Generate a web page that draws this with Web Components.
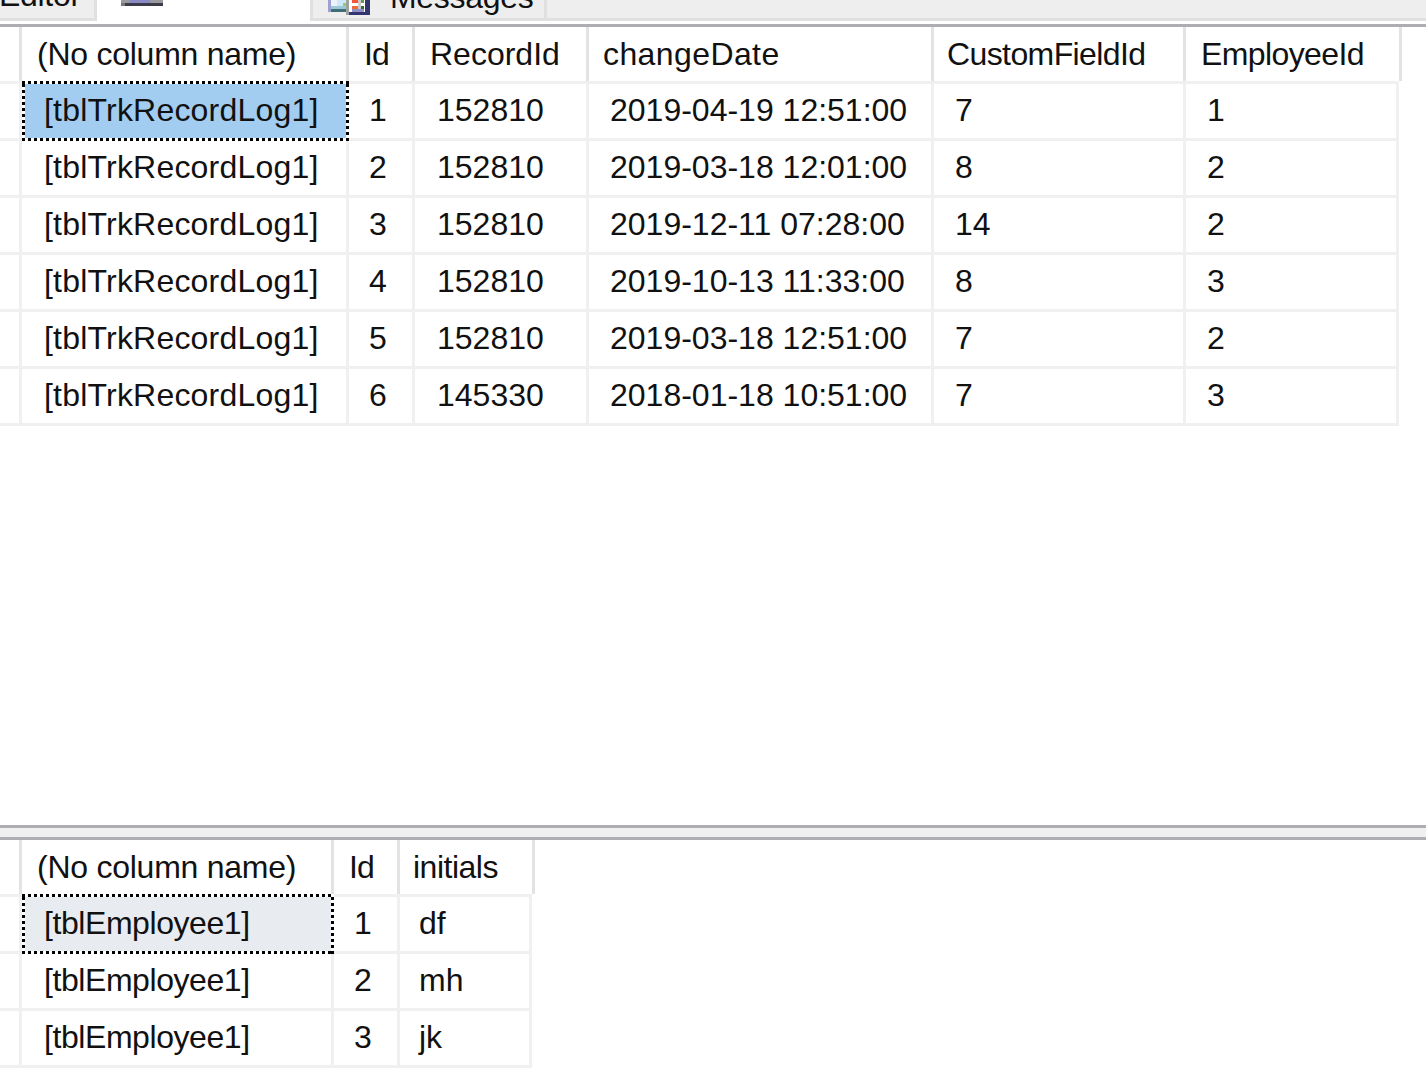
<!DOCTYPE html>
<html>
<head>
<meta charset="utf-8">
<title>Results</title>
<style>
    html, body { margin: 0; height: 100%; background: #fff; overflow: hidden; }
    body { font-family: "Liberation Sans", Arial, sans-serif; color: #000; }
    main { display: flex; flex-direction: column; height: 1075px; }
    result-grid.top { height: 798px; }
</style>
</head>
<body>
<main>
    <tab-strip></tab-strip>
    <result-grid class="top"
        cols="327,66,174,345,252,216"
        head-nudge="0,0,0,-1,-2,0"
        body-nudge="0,-2,0,-1,-1,-1"
        head="(No column name)|Id|RecordId|changeDate|CustomFieldId|EmployeeId"
        selected="#a3cdf0"
        rows="[tblTrkRecordLog1]|1|152810|2019-04-19 12:51:00|7|1;[tblTrkRecordLog1]|2|152810|2019-03-18 12:01:00|8|2;[tblTrkRecordLog1]|3|152810|2019-12-11 07:28:00|14|2;[tblTrkRecordLog1]|4|152810|2019-10-13 11:33:00|8|3;[tblTrkRecordLog1]|5|152810|2019-03-18 12:51:00|7|2;[tblTrkRecordLog1]|6|145330|2018-01-18 10:51:00|7|3"></result-grid>
    <grid-splitter></grid-splitter>
    <result-grid
        cols="312,66,135"
        head-nudge="0,0,-2"
        body-nudge="0,-2,-3"
        head="(No column name)|Id|initials"
        selected="#e8ecf0"
        rows="[tblEmployee1]|1|df;[tblEmployee1]|2|mh;[tblEmployee1]|3|jk"></result-grid>
</main>

<script>
// the reference is hinted GDI text, so some widths differ from Liberation Sans
const TRACKING = {
    "(No column name)": -0.25,
    "Id": -1,
    "changeDate": 0.4,
    "CustomFieldId": -0.6,
    "EmployeeId": -0.6,
    "initials": -0.5,
    "[tblTrkRecordLog1]": 0.2,
    "[tblEmployee1]": -0.43,
};

const tracked = (text) => {
    const t = TRACKING[text];
    return t ? `<span style="letter-spacing:${t}px">${text}</span>` : text;
};

class TabStrip extends HTMLElement {
    connectedCallback() {
        this.attachShadow({ mode: "open" });
        this.shadowRoot.innerHTML = `
            <style>
                :host { display: block; height: 27px; overflow: hidden; box-sizing: border-box; border-bottom: 3px solid #aeaeb2; background: #fff; }
                #bar { display: flex; height: 21px; align-items: flex-end; background: #eeeeee; border-bottom: 3px solid #e0e0e0; box-sizing: border-box; }
                .tab { box-sizing: border-box; height: 40px; flex: none; display: flex; align-items: flex-end; font-size: 32px; line-height: 32px; white-space: nowrap; color: #111; }
                .editor { width: 97px; border-right: 3px solid #e0e0e0; padding-bottom: 7px; text-indent: -1px; letter-spacing: -0.3px; }
                .results { width: 213px; height: 44px; background: #fff; margin-bottom: -3px; padding: 0 0 15px 24px; }
                .messages { width: 237px; padding: 0 0 5px 15px; border-left: 3px solid #e0e0e0; border-right: 3px solid #e0e0e0; gap: 20px; letter-spacing: -0.3px; }
                .messages svg { margin-bottom: -2px; }
                svg { display: block; flex: none; }
            </style>
            <div id="bar">
                <div class="tab editor">Editor</div>
                <div class="tab results">
                    <svg width="42" height="6" viewBox="0 0 42 6" shape-rendering="crispEdges">
                        <rect width="42" height="3" fill="#9a9a9e"/>
                        <rect x="9" width="20" height="3" fill="#8a8ac4"/>
                        <rect y="3" width="42" height="3" fill="#3c3c48"/>
                        <rect y="3" width="4" height="3" fill="#77777c"/>
                    </svg>
                </div>
                <div class="tab messages">
                    <svg width="42" height="15" viewBox="0 0 42 15" shape-rendering="crispEdges">
                        <rect width="3" height="12" fill="#9fa0d2"/>
                        <rect x="3" width="6" height="9" fill="#eef2fb"/>
                        <rect x="9" width="9" height="9" fill="#cfe6fb"/>
                        <rect x="15" y="3" width="3" height="3" fill="#8fcf6f"/>
                        <rect x="3" y="6" width="15" height="3" fill="#9cc8d8"/>
                        <rect x="3" y="9" width="15" height="3" fill="#3f6f72"/>
                        <rect x="18" width="3" height="15" fill="#a0a0a0"/>
                        <rect x="21" width="16" height="12" fill="#fff"/>
                        <rect x="24" width="6" height="3" fill="#f2553a"/>
                        <rect x="24" y="6" width="6" height="3" fill="#f06a3a"/>
                        <rect x="30" width="3" height="9" fill="#cccccc"/>
                        <rect x="33" width="3" height="3" fill="#6a9a4a"/>
                        <rect x="33" y="6" width="3" height="3" fill="#2e6a3a"/>
                        <rect x="24" y="9" width="12" height="3" fill="#9090c8"/>
                        <rect x="37" width="5" height="15" fill="#34346e"/>
                        <rect x="21" y="12" width="21" height="3" fill="#34346e"/>
                    </svg>
                    <span>Messages</span>
                </div>
            </div>
        `;
    }
}

class ResultGrid extends HTMLElement {
    connectedCallback() {
        this.attachShadow({ mode: "open" });
        const cols = this.getAttribute("cols").split(",").map(Number);
        const head = this.getAttribute("head").split("|");
        const rows = this.getAttribute("rows").split(";").map((r) => r.split("|"));
        const headNudge = this.getAttribute("head-nudge").split(",").map(Number);
        const bodyNudge = this.getAttribute("body-nudge").split(",").map(Number);
        const headTrack = ["22px", ...cols.map((c) => `${c}px`)].join(" ");
        // data rows stop 3px short of the header
        const bodyTrack = ["22px", ...cols.map((c, i) => `${i === cols.length - 1 ? c - 3 : c}px`)].join(" ");

        const headCells = head
            .map((h, j) => `<div class="th" style="padding-left:${15 + headNudge[j]}px">${tracked(h)}</div>`)
            .join("");
        const body = rows
            .map((row, i) => {
                const cells = row
                    .map((v, j) => {
                        const sel = i === 0 && j === 0 ? "sel" : "";
                        return `<div class="td ${sel}" style="padding-left:${22 + bodyNudge[j]}px">${tracked(v)}</div>`;
                    })
                    .join("");
                return `<div class="row" style="grid-template-columns:${bodyTrack}"><div class="td gutter"></div>${cells}</div>`;
            })
            .join("");

        this.shadowRoot.innerHTML = `
            <style>
                :host { display: block; font-size: 32px; color: #111; --sel: ${this.getAttribute("selected")}; }
                .row { display: grid; }
                .th, .td { box-sizing: border-box; white-space: nowrap; overflow: hidden; }
                .th { height: 54px; line-height: 54px; border-right: 3px solid #e3e3e3; }
                .td { height: 57px; line-height: 52px; border-right: 3px solid #f0f0f0; border-bottom: 3px solid #f0f0f0; }
                .row:first-child .td { height: 60px; border-top: 3px solid #f0f0f0; }
                .sel { position: relative; overflow: visible; background: var(--sel); }
                .sel::before, .sel::after { content: ""; position: absolute; inset: -3px -3px -3px 0; }
                .sel::before { border: 3px solid #fff; }
                .sel::after {
                    background:
                        repeating-linear-gradient(90deg, #000 0 3px, transparent 3px 6px) top / 100% 3px no-repeat,
                        repeating-linear-gradient(90deg, #000 0 3px, transparent 3px 6px) bottom / 100% 3px no-repeat,
                        repeating-linear-gradient(0deg, #000 0 3px, transparent 3px 6px) left / 3px 100% no-repeat,
                        repeating-linear-gradient(0deg, #000 0 3px, transparent 3px 6px) right / 3px 100% no-repeat;
                }
            </style>
            <div class="row" style="grid-template-columns:${headTrack}"><div class="th"></div>${headCells}</div>
            <div>${body}</div>
        `;
    }
}

class GridSplitter extends HTMLElement {
    connectedCallback() {
        this.attachShadow({ mode: "open" });
        this.shadowRoot.innerHTML = `
            <style>
                :host { display: block; height: 15px; box-sizing: border-box; background: #f0f0f0; border-top: 3px solid #aeaeb2; border-bottom: 3px solid #aeaeb2; }
            </style>
        `;
    }
}

customElements.define("tab-strip", TabStrip);
customElements.define("result-grid", ResultGrid);
customElements.define("grid-splitter", GridSplitter);
</script>
</body>
</html>
